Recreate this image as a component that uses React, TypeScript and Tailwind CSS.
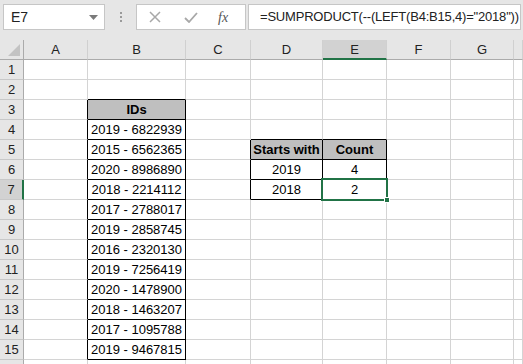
const COLS = ['A', 'B', 'C', 'D', 'E', 'F', 'G', 'H']
const WIDTHS = ['w-[64px]', 'w-[98px]', 'w-[65px]', 'w-[72px]', 'w-[64px]', 'w-[64px]', 'w-[63px]', 'w-[9px]']

const cells: Record<string, { text: string; head?: boolean }> = {
  B3: { text: 'IDs', head: true },
  B4: { text: '2019 - 6822939' },
  B5: { text: '2015 - 6562365' },
  B6: { text: '2020 - 8986890' },
  B7: { text: '2018 - 2214112' },
  B8: { text: '2017 - 2788017' },
  B9: { text: '2019 - 2858745' },
  B10: { text: '2016 - 2320130' },
  B11: { text: '2019 - 7256419' },
  B12: { text: '2020 - 1478900' },
  B13: { text: '2018 - 1463207' },
  B14: { text: '2017 - 1095788' },
  B15: { text: '2019 - 9467815' },
  D5: { text: 'Starts with', head: true },
  E5: { text: 'Count', head: true },
  D6: { text: '2019' },
  E6: { text: '4' },
  D7: { text: '2018' },
  E7: { text: '2' },
}

// column index: 1 = A ... 8 = H
function inTable(r: number, c: number) {
  if (c === 2 && r >= 3 && r <= 15) return true
  if ((c === 4 || c === 5) && r >= 5 && r <= 7) return true
  return false
}

function FormulaBar() {
  return (
    <div className="h-[40px] bg-[#e6e6e6] flex items-start pt-[4px] pl-[3px]">
      <div className="w-[102px] h-[26px] bg-white border border-[#c6c6c6] flex items-center justify-between pl-[7px] pr-[6px]">
        <span className="text-[14px] text-[#222]">E7</span>
        <svg width="9" height="5" viewBox="0 0 9 5"><path d="M0 0h9L4.5 5z" fill="#7a7a7a" /></svg>
      </div>
      <div className="w-[31px] h-[26px] flex flex-col items-center justify-center gap-[2px]">
        <span className="w-[2px] h-[2px] bg-[#9a9a9a]" />
        <span className="w-[2px] h-[2px] bg-[#9a9a9a]" />
        <span className="w-[2px] h-[2px] bg-[#9a9a9a]" />
      </div>
      <div className="w-[110px] h-[26px] bg-white border border-[#c6c6c6] flex items-center">
        <svg className="ml-[12px]" width="12" height="12" viewBox="0 0 12 12">
          <path d="M1 1l10 10M11 1L1 11" stroke="#a8a8a8" strokeWidth="1.5" />
        </svg>
        <svg className="ml-[23px]" width="14" height="11" viewBox="0 0 14 11">
          <path d="M1 6l4 4L13 1" stroke="#a8a8a8" strokeWidth="1.8" fill="none" />
        </svg>
        <span className="ml-[20px] text-[14px] italic text-[#555]" style={{ fontFamily: '"Liberation Serif", serif' }}>fx</span>
      </div>
      <div className="ml-[2px] w-[273px] h-[26px] bg-white border border-[#c6c6c6] flex items-center pl-[11px] text-[13px] tracking-[-0.2px] text-[#222] whitespace-nowrap">
        =SUMPRODUCT(--(LEFT(B4:B15,4)="2018"))
      </div>
    </div>
  )
}

function HeaderRow() {
  return (
    <div className="flex h-[20px] bg-[#e6e6e6]">
      <div className="w-[24px] h-[20px] border-r border-b border-[#ababab] relative shrink-0">
        <svg className="absolute left-[8px] top-[4px]" width="12" height="12" viewBox="0 0 12 12">
          <path d="M12 0V12H0z" fill="#c3c3c3" />
        </svg>
      </div>
      {COLS.map((c, i) => (
        <div
          key={c}
          className={`${WIDTHS[i]} shrink-0 h-[20px] flex items-center justify-center text-[13px] text-[#222] border-r border-[#d0d0d0] ${
            c === 'E' ? 'bg-[#d2d2d2] border-b-2 border-b-[#217346] pt-[1px]' : 'border-b border-b-[#ababab]'
          }`}
        >
          {c === 'H' ? '' : c}
        </div>
      ))}
    </div>
  )
}

function Row({ r }: { r: number }) {
  const sel = r === 7
  return (
    <div className="flex h-[20px]">
      <div
        className={`w-[24px] shrink-0 h-[20px] flex items-center justify-center text-[13px] text-[#222] border-b border-[#c8c8c8] ${
          sel ? 'bg-[#d2d2d2] border-r-2 border-r-[#217346]' : 'bg-[#e6e6e6] border-r border-r-[#ababab]'
        }`}
      >
        {r < 16 ? r : ''}
      </div>
      {COLS.map((c, i) => {
        const col = i + 1
        const key = `${c}${r}`
        const cell = cells[key]
        const right = inTable(r, col) || inTable(r, col + 1) ? 'border-r-black' : 'border-r-[#d4d4d4]'
        const bottom = inTable(r, col) || inTable(r + 1, col) ? 'border-b-black' : 'border-b-[#d4d4d4]'
        return (
          <div
            key={key}
            className={`${WIDTHS[i]} shrink-0 h-[20px] border-r border-b ${right} ${bottom} flex items-center justify-center text-[13px] text-black whitespace-nowrap ${
              cell?.head ? 'bg-[#bfbfbf] font-bold' : 'bg-white'
            } ${key === 'E7' ? 'relative z-10' : ''}`}
          >
            {cell?.text}
            {key === 'E7' && (
              <div className="absolute -left-[2px] -top-[2px] -right-[2px] -bottom-[2px] border-2 border-[#217346]">
                <div className="absolute -right-[4px] -bottom-[4px] w-[6px] h-[6px] bg-[#217346] border border-white" />
              </div>
            )}
          </div>
        )
      })}
    </div>
  )
}

export default function App() {
  const rows = Array.from({ length: 16 }, (_, i) => i + 1)
  return (
    <div className="w-[523px] h-[364px] overflow-hidden bg-white" style={{ fontFamily: '"Liberation Sans", Arial, sans-serif' }}>
      <FormulaBar />
      <HeaderRow />
      {rows.map((r) => (
        <Row key={r} r={r} />
      ))}
    </div>
  )
}
